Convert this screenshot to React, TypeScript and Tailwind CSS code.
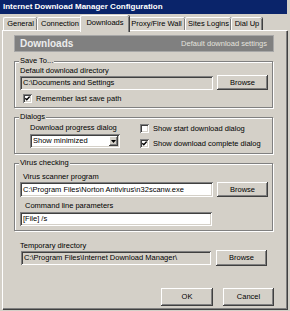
import type { ReactNode } from "react"

const raised = "shadow-[inset_-1px_-1px_#404040,inset_1px_1px_#ffffff,inset_-2px_-2px_#808080]"
const sunken = "shadow-[inset_1px_1px_#808080,inset_-1px_-1px_#ffffff,inset_2px_2px_#404040,inset_-2px_-2px_#d4d0c8]"

const tabs = [
  { label: "General", w: "w-[34px]" },
  { label: "Connection", w: "w-[45px]" },
  { label: "Downloads", w: "w-[49px]", active: true },
  { label: "Proxy/Fire Wall", w: "w-[58px]" },
  { label: "Sites Logins", w: "w-[46px]" },
  { label: "Dial Up", w: "w-[31px]" },
]

function Button({ children, className }: { children: ReactNode; className: string }) {
  return (
    <div className={`flex items-center justify-center bg-[#d4d0c8] ${raised} ${className}`}>
      {children}
    </div>
  )
}

function Field({ children, className }: { children?: ReactNode; className: string }) {
  return (
    <div className={`flex items-center overflow-hidden whitespace-nowrap pl-[3px] ${sunken} ${className}`}>
      {children}
    </div>
  )
}

function Check({ checked, label }: { checked?: boolean; label: string }) {
  return (
    <div className="flex h-[9px] items-center gap-[4px]">
      <span className={`flex h-[9px] w-[9px] items-center justify-center bg-white ${sunken}`}>
        {checked && (
          <svg width="5" height="5" viewBox="0 0 5 5">
            <path d="M0.3 2.2 L1.8 3.7 L4.7 0.6" stroke="#000" strokeWidth="1.4" fill="none" />
          </svg>
        )}
      </span>
      <span>{label}</span>
    </div>
  )
}

function Group({ title, children, className }: { title: string; children: ReactNode; className: string }) {
  return (
    <fieldset
      className={`w-[259px] border border-[#808080] pl-[5px] shadow-[inset_1px_1px_#ffffff,1px_1px_#ffffff] ${className}`}
    >
      <legend className="-ml-[1px] bg-[#d4d0c8] px-[1px] leading-[8px]">{title}</legend>
      {children}
    </fieldset>
  )
}

export default function App() {
  return (
    <div className="h-[311px] w-[290px] overflow-hidden bg-[#d4d0c8] font-['Liberation_Sans',Arial,sans-serif] text-[7.5px] leading-[8px] text-black">
      {/* title bar */}
      <div className="mr-[3px] flex h-[14px] items-center bg-[#0a246a] pl-[3px] text-[8px] font-bold text-white">
        Internet Download Manager Configuration
      </div>

      {/* tabs */}
      <div className="flex h-[16px] items-end pl-[3px]">
        {tabs.map((t) =>
          t.active ? (
            <div
              key={t.label}
              className={`relative z-10 -mx-[2px] -mb-[2px] flex h-[17px] items-start justify-center rounded-t-[2px] border-l border-t border-white bg-[#d4d0c8] pt-[3px] shadow-[inset_-1px_0_#808080,1px_0_#404040] ${t.w}`}
            >
              {t.label}
            </div>
          ) : (
            <div
              key={t.label}
              className={`flex h-[13px] items-center justify-center rounded-t-[2px] border-l border-t border-white shadow-[inset_-1px_0_#808080,1px_0_#404040] ${t.w}`}
            >
              {t.label}
            </div>
          )
        )}
      </div>

      {/* tab page */}
      <div className="ml-[2px] flex h-[279px] w-[285px] flex-col border-l border-t border-white pl-[11px] pt-[4px] shadow-[inset_-1px_-1px_#808080,1px_1px_#404040]">
        <div className="flex h-[17px] w-[260px] items-center justify-between border border-[#a8a8a8] bg-[#808080] pl-[5px] pr-[6px]">
          <span className="text-[10px] font-bold text-[#ececec]">Downloads</span>
          <span className="text-[#e4e2de]">Default download settings</span>
        </div>

        <Group title="Save To..." className="mt-[5px] h-[51px]">
          <div className="pt-[2px]">Default download directory</div>
          <div className="flex h-[15px] items-center gap-[4px]">
            <Field className="h-[14px] w-[193px]">C:\Documents and Settings</Field>
            <Button className="h-[15px] w-[51px]">Browse</Button>
          </div>
          <div className="ml-[3px] mt-[4px]">
            <Check checked label="Remember last save path" />
          </div>
        </Group>

        <Group title="Dialogs" className="mt-[5px] h-[41px]">
          <div className="flex pt-[3px]">
            <div className="ml-[10px] flex w-[110px] flex-col">
              <div>Download progress dialog</div>
              <div className={`mt-[2px] flex h-[14px] w-[90px] items-center bg-white p-[2px] ${sunken}`}>
                <span className="flex-1 pl-[1px]">Show minimized</span>
                <span className={`flex h-full w-[9px] items-center justify-center bg-[#d4d0c8] ${raised}`}>
                  <svg width="5" height="3" viewBox="0 0 5 3">
                    <path d="M0 0h5L2.5 3z" fill="#000" />
                  </svg>
                </span>
              </div>
            </div>
            <div className="flex flex-col gap-[6px]">
              <Check label="Show start download dialog" />
              <Check checked label="Show download complete dialog" />
            </div>
          </div>
        </Group>

        <Group title="Virus checking" className="mt-[5px] h-[72px]">
          <div className="ml-[3px] pt-[6px]">Virus scanner program</div>
          <div className="mt-[1px] flex h-[15px] items-center gap-[4px]">
            <Field className="h-[15px] w-[193px] bg-white">C:\Program Files\Norton Antivirus\n32scanw.exe</Field>
            <Button className="h-[15px] w-[51px]">Browse</Button>
          </div>
          <div className="ml-[5px] mt-[5px]">Command line parameters</div>
          <Field className="mt-[2px] h-[14px] w-[192px] bg-white">[File] /s</Field>
        </Group>

        <div className="ml-[6px] mt-[11px]">Temporary directory</div>
        <div className="ml-[7px] flex h-[16px] items-center gap-[5px]">
          <Field className="h-[14px] w-[190px]">C:\Program Files\Internet Download Manager\</Field>
          <Button className="h-[16px] w-[51px]">Browse</Button>
        </div>

        <div className="ml-[147px] mt-[22px] flex gap-[10px]">
          <Button className="h-[18px] w-[52px]">OK</Button>
          <Button className="h-[18px] w-[51px]">Cancel</Button>
        </div>
      </div>
    </div>
  )
}
